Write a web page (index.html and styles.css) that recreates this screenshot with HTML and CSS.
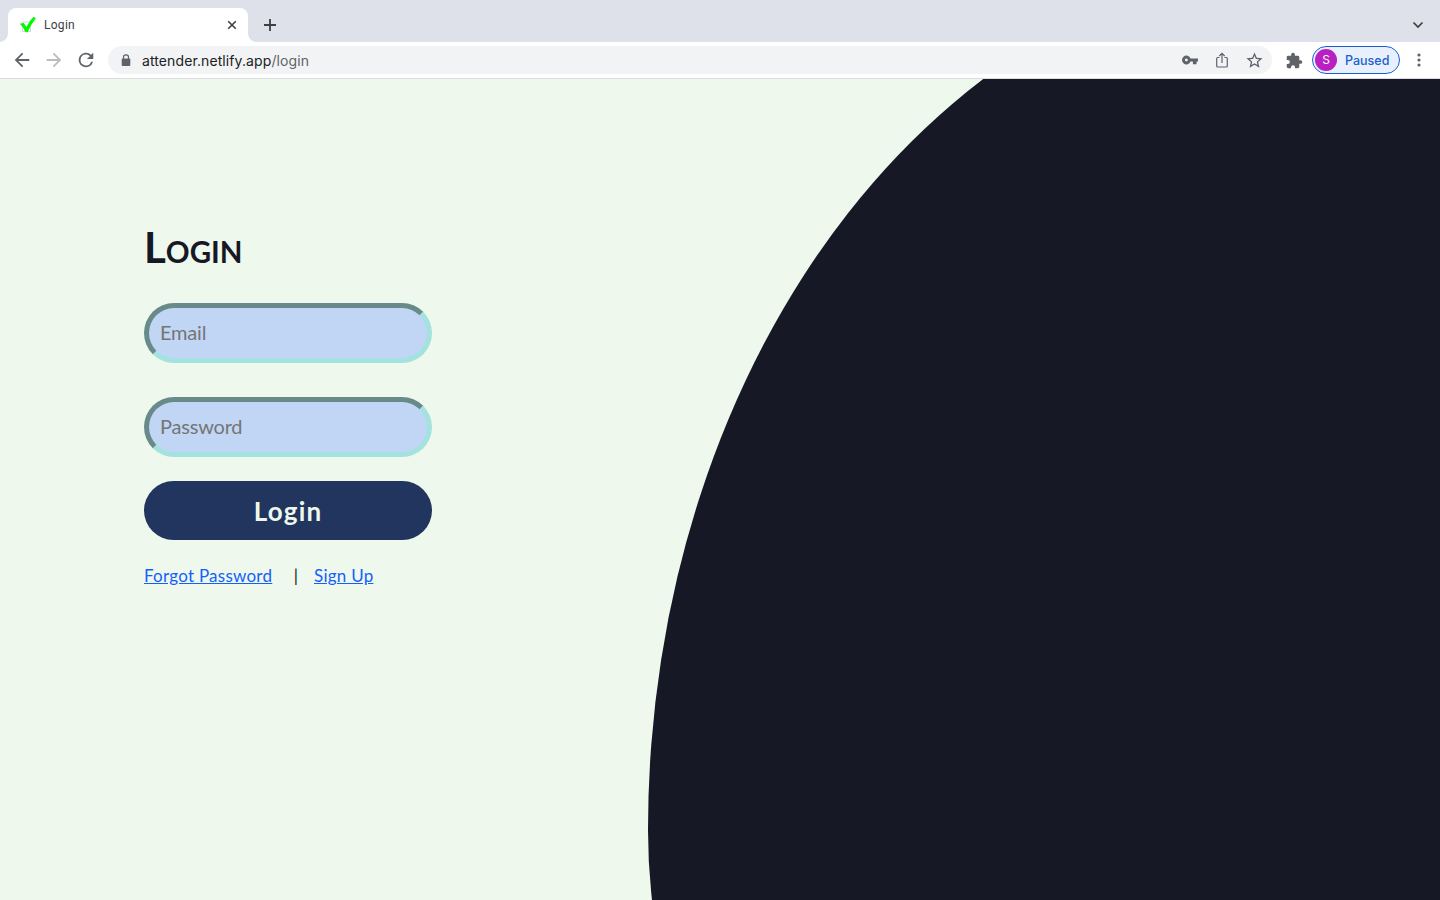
FILE: index.html
```html
<!DOCTYPE html>
<html lang="en">
<head>
<meta charset="utf-8">
<title>Login</title>
<link rel="stylesheet" href="styles.css">
</head>
<body>
<div class="browser">
  <header class="tabstrip">
    <div class="tab">
      <svg class="favicon" width="18" height="18" viewBox="0 0 18 18"><path d="M3.500 6h8v9.500h-8z" fill="none" stroke="#c3cfc3" stroke-width=".8"/><path d="M.8 7.800 4.800 7 7.300 11Q10.500 4.500 14.500 1L17 2Q11.500 9 8.500 16.500L6.200 15.800Q4 10.500 .8 7.800Z" fill="#00f800"/></svg>
      <span class="tab-title">Login</span>
      <svg class="tab-close" width="10" height="10" viewBox="0 0 10 10"><path d="m1.200 1.200 7.600 7.600m0-7.600L1.200 8.800" fill="none" stroke="#3c4043" stroke-width="1.600"/></svg>
    </div>
    <svg class="new-tab" width="14" height="14" viewBox="0 0 14 14"><path d="M7 1v12M1 7h12" stroke="#3c4043" stroke-width="1.800"/></svg>
    <svg class="tab-search" width="12" height="8" viewBox="0 0 12 8"><path d="m1.500 1.500 4.500 4.500 4.500-4.500" fill="none" stroke="#3c4043" stroke-width="1.700"/></svg>
  </header>
  <div class="toolbar">
    <nav class="nav">
      <svg width="20" height="20" viewBox="1 1 22 22" fill="#5f6368"><path d="M20 11H7.830l5.590-5.590L12 4l-8 8 8 8 1.410-1.410L7.830 13H20z"/></svg>
      <svg width="20" height="20" viewBox="1 1 22 22" fill="#babcbe"><path d="m12 4-1.410 1.410L16.170 11H4v2h12.170l-5.580 5.590L12 20l8-8z"/></svg>
      <svg width="20" height="20" viewBox="1 1 22 22" fill="#5f6368"><path d="M17.650 6.350A8 8 0 1 0 19.730 14h-2.080A6 6 0 1 1 12 6c1.660 0 3.140.69 4.220 1.780L13 11h7V4z"/></svg>
    </nav>
    <div class="omnibox">
      <svg class="lock" width="10" height="13" viewBox="0 0 10 13"><path d="M2.500 5V3a2.500 2.200 0 0 1 5 0v2" fill="none" stroke="#5f6368" stroke-width="1.200"/><rect x=".7" y="4.500" width="8.600" height="7.500" rx="1" fill="#5f6368"/></svg>
      <span class="url">attender.netlify.app<span class="path">/login</span></span>
      <div class="actions">
        <svg width="16" height="16" viewBox="1 1 22 22" fill="#5f6368"><path d="M12.650 10A6 6 0 1 0 12.650 14H16v4h5v-4h2v-4zM7 14a2 2 0 1 1 0-4 2 2 0 0 1 0 4z"/></svg>
        <svg width="16" height="16" viewBox="0 0 16 16" fill="none" stroke="#5f6368" stroke-width="1.200"><path d="M5.500 5.500H3.600Q2.700 5.500 2.700 6.400v7.700q0 .9.900.9h8.800q.9 0 .9-.9V6.400q0-.9-.9-.9h-1.900M8 11V1.500M5.300 4 8 1.300 10.700 4"/></svg>
        <svg width="17" height="17" viewBox="1.500 1.500 21 21" fill="#5f6368"><path d="m22 9.240-7.190-.62L12 2 9.190 8.630 2 9.240l5.460 4.730L5.820 21 12 17.270 18.180 21l-1.630-7.030zM12 15.400l-3.760 2.270 1-4.280-3.320-2.880 4.380-.38L12 6.100l1.710 4.040 4.380.38-3.320 2.880 1 4.280z"/></svg>
      </div>
    </div>
    <svg class="extensions" width="17" height="17" viewBox="1 0 23 23" fill="#5f6368"><path d="M20.500 11H19V7a2 2 0 0 0-2-2h-4V3.500a2.500 2.500 0 0 0-5 0V5H4a2 2 0 0 0-2 2v3.800h1.500a2.700 2.700 0 0 1 0 5.400H2V20a2 2 0 0 0 2 2h3.800v-1.500a2.700 2.700 0 0 1 5.400 0V22H17a2 2 0 0 0 2-2v-4h1.500a2.500 2.500 0 0 0 0-5z"/></svg>
    <div class="profile"><span class="avatar">S</span><span class="state">Paused</span></div>
    <svg class="menu" width="4" height="14" viewBox="0 0 4 14" fill="#5f6368"><circle cx="2" cy="2" r="1.600"/><circle cx="2" cy="7" r="1.600"/><circle cx="2" cy="12" r="1.600"/></svg>
  </div>
  <main class="page">
    <form class="login">
      <h1 class="heading">L<span class="small-cap">OGIN</span></h1>
      <input class="field" type="email" placeholder="Email">
      <input class="field" type="password" placeholder="Password">
      <button class="submit" type="button">Login</button>
      <div class="links"><a class="forgot" href="#">Forgot Password</a><span class="divider">|</span><a class="signup" href="#">Sign Up</a></div>
    </form>
    <div class="curve"></div>
  </main>
</div>
</body>
</html>
```
FILE: styles.css
```css
* { box-sizing: border-box; }
body { margin: 0; overflow: hidden; font-family: Lato, "Noto Sans", sans-serif; }
svg { display: block; flex: none; }
.browser { width: 1440px; height: 900px; display: flex; flex-direction: column; }
.tabstrip { height: 42px; background: #dee1e9; display: flex; align-items: flex-end; padding: 0 16px 0 8px; flex: none; }
.tab { position: relative; width: 240px; height: 34px; background: #fff; border-radius: 8px 8px 0 0; display: flex; align-items: center; padding: 0 11px; }
.tab::before, .tab::after { content: ""; position: absolute; bottom: 0; width: 8px; height: 8px; }
.tab::before { left: -8px; background: radial-gradient(circle at 0 0, transparent 7.500px, #fff 8px); }
.tab::after { right: -8px; background: radial-gradient(circle at 100% 0, transparent 7.500px, #fff 8px); }
.tab-title { margin-left: 7px; font: 12px Roboto, sans-serif; letter-spacing: .28px; color: #3c4043; }
.tab-close { margin-left: auto; }
.new-tab { margin: 0 0 10px 15px; }
.tab-search { margin: 0 0 13px auto; }
.toolbar { height: 37px; flex: none; display: flex; align-items: center; background: #fff; border-bottom: 1px solid #dadce0; padding: 0 20px 0 12px; }
.nav { display: flex; gap: 12px; }
.omnibox { width: 1164px; height: 28px; border-radius: 14px; background: #f1f3f4; margin-left: 12px; display: flex; align-items: center; padding: 0 10px 0 13px; }
.url { margin-left: 11px; font: 14px Inter, sans-serif; letter-spacing: .1px; color: #202124; }
.path { color: #5f6368; }
.actions { margin-left: auto; margin-right: -.5px; display: flex; align-items: center; gap: 16px; }
.extensions { margin-left: 14px; }
.profile { width: 88px; height: 28px; margin-left: 9px; border: 1px solid #1a5fd0; border-radius: 14px; background: #e8f0fe; display: flex; align-items: center; padding-left: 2px; font-family: Inter, sans-serif; }
.avatar { width: 22px; height: 22px; border-radius: 50%; background: #b91fc1; color: #fff; font-size: 12px; line-height: 22px; text-align: center; }
.state { margin-left: 8px; font: 500 12.500px Inter, sans-serif; color: #1a5fd0; }
.menu { margin-left: auto; margin-right: -.5px; }
.page { flex: 1; min-height: 0; position: relative; background: #eef8ec; overflow: hidden; }
.login { width: 288px; margin-left: 144px; padding-top: 143px; display: flex; flex-direction: column; }
.heading { margin: 0; height: 81px; font-size: 42px; line-height: 50px; font-weight: 700; color: #161925; }
.small-cap { font-size: 29.500px; }
.field { width: 288px; height: 60px; margin: 0 0 34px; padding: 0 12px 2px 11px; border: 5px solid; border-color: #688b8a #a3e2de #a3e2de #688b8a; border-radius: 30px; background: #c1d5f5; font: 20px Lato, sans-serif; letter-spacing: -.2px; }
.field::placeholder { color: #757575; }
.field + .submit { margin-top: -10px; }
.submit { width: 288px; height: 59px; padding: 0; border: 0; border-radius: 30px; background: #21355e; color: #edf8ec; font: 700 26px Lato, sans-serif; letter-spacing: 1.200px; }
.links { display: flex; margin-top: 26px; font-size: 17px; line-height: 20px; color: #161925; white-space: nowrap; }
.links a { color: #1460fa; text-decoration: underline; letter-spacing: .25px; }
.forgot { width: 129px; }
.divider { margin: 0 15px 0 20px; width: 6px; text-align: center; }
.curve { position: absolute; left: 648px; top: -122px; width: 1368px; height: 1520px; background: #161925; border-radius: 684px / 873px 873px 647px 647px; }
```
